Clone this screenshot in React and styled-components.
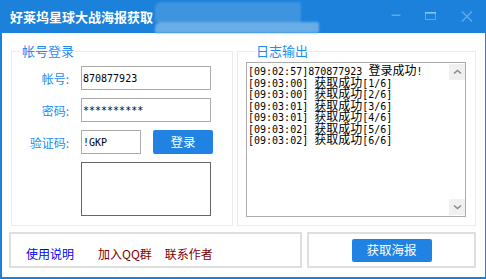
import React from 'react';
import styled, { createGlobalStyle } from 'styled-components';

const BLUE = '#1b81da';
const ACCENT = '#1e8cf5';
const BUTTON = '#2083e3';
const CJK = '"Noto Sans CJK SC", "Liberation Sans", sans-serif';
const MONO = '"DejaVu Sans Mono", "Liberation Mono", monospace';

const GlobalStyle = createGlobalStyle`
  html, body {
    margin: 0;
    padding: 0;
    background: #fff;
  }
  body {
    font-family: ${CJK};
    font-size: 12px;
  }
  * {
    box-sizing: border-box;
  }
`;

const LOG = [
  '[09:02:57]870877923 登录成功!',
  '[09:03:00] 获取成功[1/6]',
  '[09:03:00] 获取成功[2/6]',
  '[09:03:01] 获取成功[3/6]',
  '[09:03:01] 获取成功[4/6]',
  '[09:03:02] 获取成功[5/6]',
  '[09:03:02] 获取成功[6/6]',
];

// ascii runs stay in the narrow mono face, chinese runs get the 12px CJK face
const LogLine = ({ text }) => (
  <Line>
    {text.split(/([^\x00-\x7f]+)/).map((part, i) =>
      /[^\x00-\x7f]/.test(part) ? <Han key={i}>{part}</Han> : part
    )}
  </Line>
);

const Chevron = ({ down }) => (
  <svg width="9" height="6" viewBox="0 0 9 6">
    <path
      d={down ? 'M1 1.5 L4.5 4.5 L8 1.5' : 'M1 4.5 L4.5 1.5 L8 4.5'}
      fill="none"
      stroke="#8a8a8a"
      strokeWidth="1.6"
    />
  </svg>
);

const App = () => {
  return (
    <>
      <GlobalStyle />
      <Window>
        <TitleBar>
          <Title>好莱坞星球大战海报获取</Title>
          <BlurPatch>
            <BlurBand $w={146} $h={20} $c="#3f94df" />
            <BlurBand $w={164} $h={11} $c="#69ade8" />
          </BlurPatch>
          <Spacer />
          <Control $w={30}>
            <svg width="10" height="10" viewBox="0 0 10 10">
              <rect x="0.5" y="2.5" width="9" height="1.5" fill="currentColor" />
            </svg>
          </Control>
          <Control $w={38}>
            <svg width="11" height="9" viewBox="0 0 11 9">
              <rect x="0.5" y="0.5" width="10" height="7" fill="none" stroke="currentColor" />
              <rect x="0" y="0" width="11" height="2" fill="currentColor" />
            </svg>
          </Control>
          <Control $w={36}>
            <svg width="12" height="11" viewBox="0 0 12 11">
              <path d="M1 0.5 L11 10.5 M11 0.5 L1 10.5" stroke="currentColor" strokeWidth="1.6" />
            </svg>
          </Control>
        </TitleBar>

        <Content>
          <TopRow>
            <LoginGroup>
              <Legend>帐号登录</Legend>
              <Form>
                <FormRow>
                  <FieldLabel>帐号:</FieldLabel>
                  <TextInput $w={130} defaultValue="870877923" />
                </FormRow>
                <FormRow>
                  <FieldLabel>密码:</FieldLabel>
                  <TextInput $w={130} defaultValue="**********" />
                </FormRow>
                <FormRow>
                  <FieldLabel>验证码:</FieldLabel>
                  <TextInput $w={60} defaultValue="!GKP" />
                  <BlueButton $w={60} $h={24}>登录</BlueButton>
                </FormRow>
                <CaptchaBox />
              </Form>
            </LoginGroup>

            <LogGroup>
              <Legend>日志输出</Legend>
              <LogBox>
                <LogText>
                  {LOG.map((l, i) => (
                    <LogLine key={i} text={l} />
                  ))}
                </LogText>
                <ScrollBar>
                  <ScrollButton>
                    <Chevron />
                  </ScrollButton>
                  <ScrollButton>
                    <Chevron down />
                  </ScrollButton>
                </ScrollBar>
              </LogBox>
            </LogGroup>
          </TopRow>

          <BottomRow>
            <LinkPanel>
              <PanelLink $tone="#0000ff">使用说明</PanelLink>
              <PanelLink $tone="#800000" $gap={24}>加入QQ群</PanelLink>
              <PanelLink $tone="#800000" $gap={13}>联系作者</PanelLink>
            </LinkPanel>
            <ActionPanel>
              <BlueButton $w={80} $h={23}>获取海报</BlueButton>
            </ActionPanel>
          </BottomRow>
        </Content>
      </Window>
    </>
  );
};

export default App;

const Window = styled.div`
  width: 486px;
  height: 279px;
  display: flex;
  flex-direction: column;
  background: #fff;
  border: solid ${BLUE};
  border-width: 0 1px 2px 2px;
  overflow: hidden;
`;

const TitleBar = styled.div`
  height: 33px;
  flex: none;
  display: flex;
  align-items: center;
  padding-left: 8px;
  background: ${BLUE};
`;

const Title = styled.div`
  color: #fff;
  font-size: 13px;
  font-weight: bold;
  line-height: 16px;
  white-space: nowrap;
`;

const BlurPatch = styled.div`
  align-self: flex-end;
  margin-left: 2px;
  display: flex;
  flex-direction: column;
  filter: blur(1px);
`;

const BlurBand = styled.div`
  width: ${({ $w }) => $w}px;
  height: ${({ $h }) => $h}px;
  background: ${({ $c }) => $c};
  border-radius: 6px 2px 2px 0;
`;

const Spacer = styled.div`
  flex: 1;
`;

const Control = styled.div`
  width: ${({ $w }) => $w}px;
  height: 33px;
  display: flex;
  align-items: center;
  justify-content: center;
  color: rgba(255, 255, 255, 0.3);
`;

const Content = styled.div`
  flex: 1;
  display: flex;
  flex-direction: column;
  padding: 10px 9px 9px 7px;
`;

const TopRow = styled.div`
  display: flex;
  gap: 4px;
  margin-left: 2px;
`;

const Group = styled.fieldset`
  margin: 0;
  min-width: 0;
  border: 1px solid #ebebeb;
`;

const LoginGroup = styled(Group)`
  width: 222px;
  padding: 0 0 9px;
`;

const LogGroup = styled(Group)`
  flex: 1;
  padding: 3px 8px 8px;
`;

const Legend = styled.legend`
  margin-left: 9px;
  padding: 0 1px;
  font-size: 13px;
  line-height: 16px;
  color: ${ACCENT};
`;

const Form = styled.div`
  display: flex;
  flex-direction: column;
  gap: 8px;
  padding-top: 7px;
`;

const FormRow = styled.div`
  display: flex;
  align-items: center;
  gap: 12px;
`;

const FieldLabel = styled.label`
  width: 57px;
  text-align: right;
  font-size: 12px;
  color: ${ACCENT};
  white-space: nowrap;
`;

const TextInput = styled.input`
  width: ${({ $w }) => $w}px;
  height: 24px;
  margin: 0;
  padding: 0 1px;
  border: 1px solid #ababab;
  border-radius: 0;
  outline: none;
  font-family: ${MONO};
  font-size: 10px;
  color: #000;
  background: #fff;
`;

const BlueButton = styled.button`
  width: ${({ $w }) => $w}px;
  height: ${({ $h }) => $h}px;
  margin: 0;
  padding: 0;
  border: none;
  border-radius: 2px;
  background: ${BUTTON};
  color: #fff;
  font-family: ${CJK};
  font-size: 12.5px;
  line-height: 1;
`;

const CaptchaBox = styled.div`
  width: 130px;
  height: 54px;
  margin-left: 69px;
  border: 1px solid #666;
`;

const LogBox = styled.div`
  width: 220px;
  height: 155px;
  display: flex;
  border: 1px solid #ababab;
`;

const LogText = styled.div`
  flex: 1;
  padding: 1px;
  font-family: ${MONO};
  font-size: 10px;
  color: #000;
`;

const Line = styled.div`
  height: 11.5px;
  line-height: 11.5px;
  white-space: pre;
`;

const Han = styled.span`
  font-family: ${CJK};
  font-size: 12px;
`;

const ScrollBar = styled.div`
  width: 16px;
  display: flex;
  flex-direction: column;
  justify-content: space-between;
  padding: 1px 0;
`;

const ScrollButton = styled.div`
  width: 16px;
  height: 16px;
  display: flex;
  align-items: center;
  justify-content: center;
  background: #f0f0f0;
`;

const BottomRow = styled.div`
  display: flex;
  gap: 5px;
  margin-top: 6px;
  height: 36px;
`;

const Panel = styled.div`
  display: flex;
  align-items: center;
  border: 2px solid #dedede;
`;

const LinkPanel = styled(Panel)`
  width: 293px;
  padding: 6px 0 0 15px;
`;

const ActionPanel = styled(Panel)`
  flex: 1;
  justify-content: center;
`;

const PanelLink = styled.a`
  margin-left: ${({ $gap }) => $gap || 0}px;
  font-size: 12px;
  color: ${({ $tone }) => $tone};
  text-decoration: none;
  cursor: pointer;
`;
